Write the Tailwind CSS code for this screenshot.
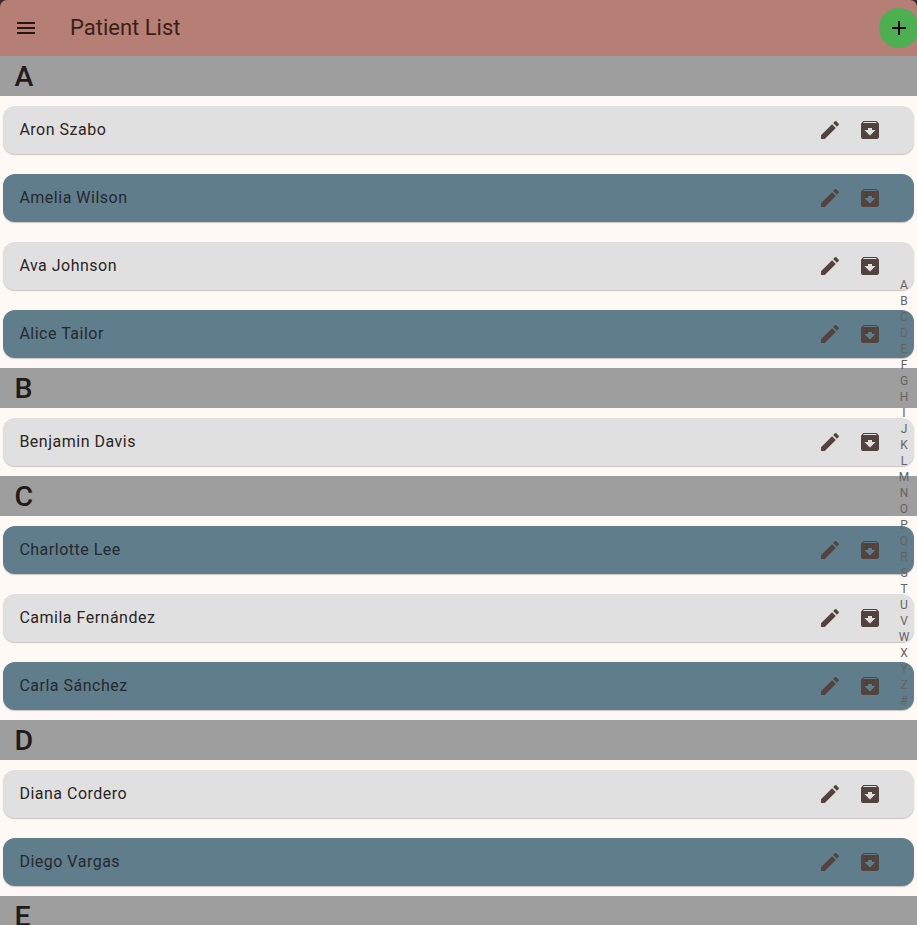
<!DOCTYPE html>
<html lang="en">
<head>
<meta charset="utf-8">
<title>Patient List</title>
<script src="https://cdn.jsdelivr.net/npm/@tailwindcss/browser@4"></script>
</head>
<body class="bg-[#fff9f6]">
<svg class="hidden">
  <symbol id="edit" viewBox="0 0 24 24"><path d="M3 17.25V21h3.75L17.81 9.94l-3.75-3.75L3 17.25zM20.71 7.04c.39-.39.39-1.02 0-1.41l-2.34-2.34c-.39-.39-1.02-.39-1.41 0l-1.83 1.83 3.75 3.75 1.83-1.83z"/></symbol>
  <symbol id="archive" viewBox="0 0 24 24"><path d="M20.54 5.23l-1.39-1.68C18.88 3.21 18.47 3 18 3H6c-.47 0-.88.21-1.16.55L3.46 5.23C3.17 5.57 3 6.02 3 6.5V19c0 1.1.9 2 2 2h14c1.1 0 2-.9 2-2V6.5c0-.48-.17-.93-.46-1.27zM12 17.5L6.5 12H10v-2h4v2h3.5L12 17.5zM5.12 5l.81-1h12l.94 1H5.12z"/></symbol>
</svg>
<div class="relative h-[925px] overflow-hidden bg-[#fff9f6] font-['Roboto',sans-serif] text-[#201a18]">
  <div class="bg-[#3a2a28]">
    <header class="flex h-14 items-center overflow-hidden rounded-t-[7px] bg-[#b57f76] pl-[14px]">
      <svg class="size-6 shrink-0 fill-[#2b1512]" viewBox="0 0 24 24"><path d="M3 18h18v-2H3v2zm0-5h18v-2H3v2zm0-7v2h18V6H3z"/></svg>
      <h1 class="ml-8 flex-1 text-[22px] leading-7 text-[#3b1f17]">Patient List</h1>
      <button class="-mr-[2px] flex size-10 shrink-0 items-center justify-center rounded-full bg-[#4caf50]">
        <svg class="size-6 fill-black" viewBox="0 0 24 24"><path d="M19 13h-6v6h-2v-6H5v-2h6V5h2v6h6v2z"/></svg>
      </button>
    </header>
  </div>
  <main id="list"></main>
  <nav id="index" class="absolute top-[277px] right-0 flex w-[26px] flex-col text-center text-xs leading-4 text-[#646464]"></nav>
</div>
<script>
const groups = [
  ['A', ['Aron Szabo', 'Amelia Wilson', 'Ava Johnson', 'Alice Tailor']],
  ['B', ['Benjamin Davis']],
  ['C', ['Charlotte Lee', 'Camila Fernández', 'Carla Sánchez']],
  ['D', ['Diana Cordero', 'Diego Vargas']],
  ['E', []]
];
let n = 0;
document.getElementById('list').innerHTML = groups.map(([letter, names]) => `
  <section>
    <h2 class="h-10 bg-[#9e9e9e] pt-px pl-[14.5px] text-[28.5px] leading-10 font-medium">${letter}</h2>
    ${names.map(name => `
    <div class="px-[3px] py-[10px]">
      <div class="${n++ % 2 ? 'bg-[#607d8b] text-[#25292f]' : 'bg-[#e0e0e0] text-[#2b2523]'} flex h-12 items-center rounded-xl pr-[32px] pl-4 shadow-[0_1px_1px_rgba(0,0,0,0.22)]">
        <span class="flex-1 text-base leading-6 tracking-[0.5px]"><span class="-mt-px block pl-[0.4px]">${name}</span></span>
        <svg class="mr-4 size-6 fill-[#53433f]"><use href="#edit"/></svg>
        <svg class="size-6 fill-[#53433f]"><use href="#archive"/></svg>
      </div>
    </div>`).join('')}
  </section>`).join('');
document.getElementById('index').innerHTML =
  [...'ABCDEFGHIJKLMNOPQRSTUVWXYZ#'].map(c => `<span>${c}</span>`).join('');
</script>
</body>
</html>
